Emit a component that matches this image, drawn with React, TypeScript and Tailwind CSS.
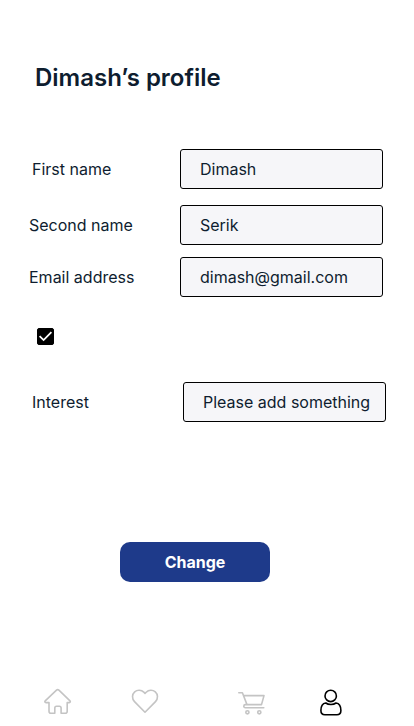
import type { ReactNode } from "react";

type FieldProps = {
  id: string;
  label: string;
  type?: string;
  value?: string;
  placeholder?: string;
  className: string;
  labelWidth: string;
};

function Field({ id, label, type = "text", value, placeholder, className, labelWidth }: FieldProps) {
  return (
    <div className={`flex items-center ${className}`}>
      <label htmlFor={id} className={`shrink-0 ${labelWidth}`}>
        {label}
      </label>
      <input
        id={id}
        type={type}
        defaultValue={value}
        placeholder={placeholder}
        className="h-10 min-w-0 flex-1 rounded-[3px] border border-black bg-[#f6f6f9] pl-[19px] placeholder:text-[#0e1d2f] placeholder:opacity-100"
      />
    </div>
  );
}

function NavItem({ label, className, children }: { label: string; className: string; children: ReactNode }) {
  return (
    <a href="#" aria-label={label} className={className}>
      <svg
        width="30"
        height="30"
        viewBox="0 0 30 30"
        fill="none"
        stroke="currentColor"
        strokeWidth="1.6"
        strokeLinecap="round"
        strokeLinejoin="round"
      >
        {children}
      </svg>
    </a>
  );
}

export default function App() {
  return (
    <main className="min-h-screen bg-white pt-[62px] font-['Inter',sans-serif] text-base text-[#0e1d2f]">
      <h1 className="pl-[35px] text-2xl font-semibold">Dimash’s profile</h1>

      <form className="flex flex-col pt-[55px]" onSubmit={(e) => e.preventDefault()}>
        <Field id="first" label="First name" value="Dimash" className="pr-[31px] pl-8" labelWidth="w-[148px]" />
        <Field id="second" label="Second name" value="Serik" className="mt-4 pr-[31px] pl-[29px]" labelWidth="w-[151px]" />
        <Field
          id="email"
          label="Email address"
          type="email"
          value="dimash@gmail.com"
          className="mt-3 pr-[31px] pl-[29px]"
          labelWidth="w-[151px]"
        />

        <label className="relative mt-[31px] ml-[37px] flex size-[17px]">
          <input
            type="checkbox"
            defaultChecked
            aria-label="Confirm"
            className="peer size-[17px] appearance-none rounded-xs border border-black checked:bg-black"
          />
          <svg
            viewBox="0 0 17 17"
            className="pointer-events-none absolute inset-0 hidden size-[17px] peer-checked:block"
            fill="none"
            stroke="white"
            strokeWidth="1.8"
          >
            <path d="M2.6 8.2 6.6 12.1 14.4 4.2" />
          </svg>
        </label>

        <Field
          id="interest"
          label="Interest"
          placeholder="Please add something"
          className="mt-[37px] pr-7 pl-8"
          labelWidth="w-[151px]"
        />

        <button type="submit" className="mt-[120px] mr-6 h-10 w-[150px] self-center rounded-[10px] bg-[#1e3a8a] font-bold text-white">
          Change
        </button>
      </form>

      <nav className="flex justify-between pt-[105px] pr-[68px] pl-[43px]">
        <NavItem label="Home" className="text-[#c4c4c4]">
          <path d="M6 15.6H3C1.8 15.6 1.5 14.6 2.2 13.9L13.5 3.2C14.2 2.6 15.2 2.6 15.9 3.2L27 13.9C27.7 14.6 27.3 15.6 26.2 15.6H24.2V24.3C24.2 25.6 23.5 26.3 22.3 26.3H18.1V20.9C18.1 19.8 17.5 19.2 16.4 19.2H13.5C12.4 19.2 11.8 19.8 11.8 20.9V26.3H7.9C6.7 26.3 6 25.6 6 24.3Z" />
        </NavItem>
        <NavItem label="Favourites" className="ml-2 text-[#c4c4c4]">
          <path d="M15 25.2 4.5 14.6C1.7 11.7 2 7.3 4.7 4.9C7.3 2.6 11.3 2.8 13.8 5.2L15 6.4L16.2 5.2C18.7 2.8 22.7 2.6 25.3 4.9C28 7.3 28.3 11.7 25.5 14.6Z" />
        </NavItem>
        <NavItem label="Cart" className="ml-7 text-[#c4c4c4]">
          <path d="M1.8 5.7H5.4L10 17.6M6.5 8.6H27L24.5 17.6H8.4C6.3 17.6 6.2 20.7 8.4 20.7H26.8" />
          <circle cx="10.4" cy="25.3" r="1.6" />
          <circle cx="22.3" cy="25.3" r="1.6" />
        </NavItem>
        <NavItem label="Profile" className="text-black">
          <circle cx="14.7" cy="8.9" r="5.7" />
          <path d="M9.8 16C6.5 16.4 4.9 19.8 4.9 23.6C4.9 26.5 6.2 27.8 8.9 27.8H20.9C23.6 27.8 24.9 26.5 24.9 23.6C24.9 19.8 23.3 16.4 20 16C18.7 17 16.8 17.5 14.9 17.5C13 17.5 11.1 17 9.8 16Z" />
        </NavItem>
      </nav>
    </main>
  );
}
